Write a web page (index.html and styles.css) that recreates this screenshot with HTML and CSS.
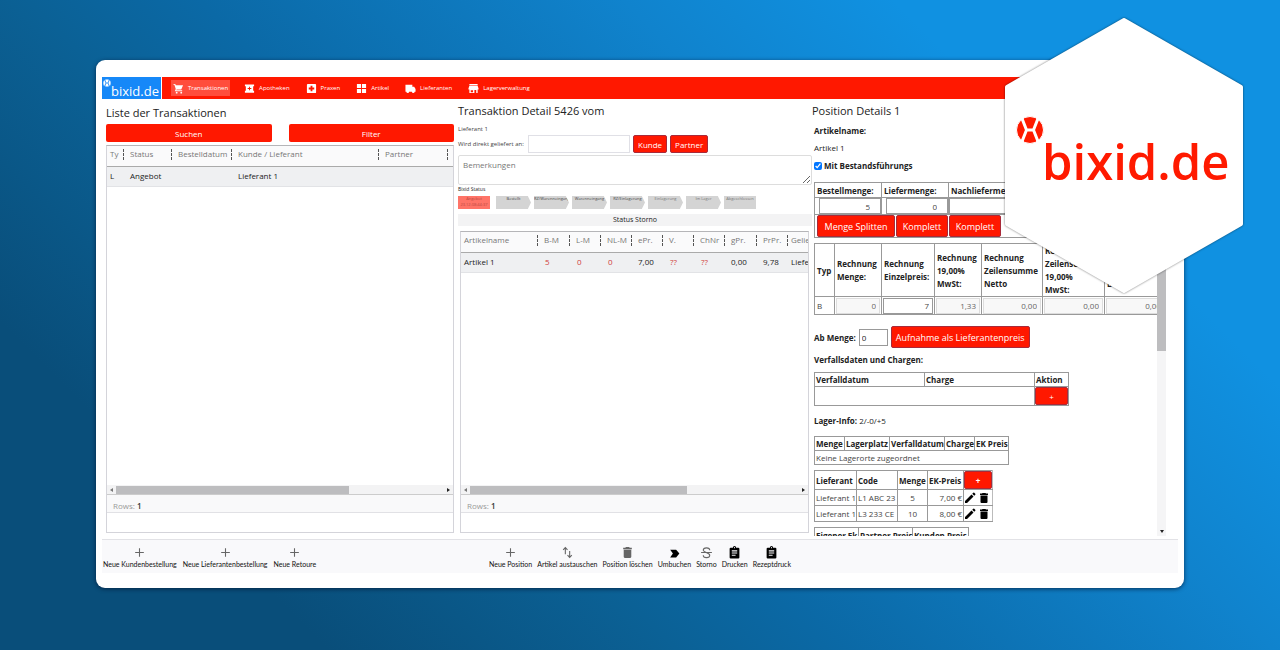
FILE: index.html
```html
<!DOCTYPE html>
<html lang="de">
<head>
<meta charset="utf-8">
<meta name="viewport" content="width=device-width, initial-scale=1">
<title>bixid.de – Transaktionen</title>
<link rel="stylesheet" href="styles.css">
</head>
<body>
<svg class="defs" aria-hidden="true">
  <symbol id="ball" viewBox="-14 -14 28 28"><circle r="13.5" fill="currentColor"/><path class="ball-lines" d="M-9-14-3.500 0-9 14M9-14 3.500 0 9 14M-3 0H3" fill="none" stroke-width="3"/></symbol>
  <symbol id="plus" viewBox="0 0 24 24"><path d="M12 4v16M4 12h16" fill="none" stroke="currentColor" stroke-width="2"/></symbol>
  <symbol id="trash" viewBox="0 0 24 24"><path d="M5 7h14v13a2 2 0 0 1-2 2H7a2 2 0 0 1-2-2zM4 3h4l1-1h6l1 1h4v3H4z"/></symbol>
  <symbol id="pencil" viewBox="0 0 24 24"><path d="M2 18 15 5l4 4L6 22H2zM16.500 3.500l2-2a1.500 1.500 0 0 1 2 0l2 2a1.500 1.500 0 0 1 0 2l-2 2z"/></symbol>
  <symbol id="clip" viewBox="0 0 24 24"><path fill-rule="evenodd" d="M19 3h-4a3 3 0 0 0-6 0H5a2 2 0 0 0-2 2v16a2 2 0 0 0 2 2h14a2 2 0 0 0 2-2V5a2 2 0 0 0-2-2zm-7-1a1 1 0 1 1 0 2 1 1 0 0 1 0-2zM7 8h10v2H7zm0 4h10v2H7zm0 4h7v2H7z"/></symbol>
</svg>

<main class="card">
  <header class="topbar">
    <a class="brand brand-small" href="#"><svg class="brand-ball"><use href="#ball"/></svg><span class="brand-name">bixid.de</span></a>
    <nav class="nav">
      <a class="nav-item active" href="#"><svg viewBox="0 0 24 24"><path d="M1 2h4l1 3h16l-4 9H8l-1 2h13v2H4l2-5L3 4H1z"/><circle cx="8" cy="21" r="2"/><circle cx="18" cy="21" r="2"/></svg>Transaktionen</a>
      <a class="nav-item" href="#"><svg viewBox="0 0 24 24"><path fill-rule="evenodd" d="M2 3h20v4h-2v10h2v4H2v-4h2V7H2zm9 5v3H8v2h3v3h2v-3h3v-2h-3V8z"/></svg>Apotheken</a>
      <a class="nav-item" href="#"><svg viewBox="0 0 24 24"><path fill-rule="evenodd" d="M4 2h16a2 2 0 0 1 2 2v16a2 2 0 0 1-2 2H4a2 2 0 0 1-2-2V4a2 2 0 0 1 2-2zm6 4v4H6v4h4v4h4v-4h4v-4h-4V6z"/></svg>Praxen</a>
      <a class="nav-item" href="#"><svg viewBox="0 0 24 24"><path d="M2 2h9v9H2zM13 2h9v9h-9zM2 13h9v9H2zM13 13h9v9h-9z"/></svg>Artikel</a>
      <a class="nav-item" href="#"><svg viewBox="0 0 24 24"><path d="M1 4h15v4h4l3 5v6h-2a3 3 0 0 1-6 0H9a3 3 0 0 1-6 0H1z"/></svg>Lieferanten</a>
      <a class="nav-item" href="#"><svg viewBox="0 0 24 24"><path fill-rule="evenodd" d="M3 2h18v3H3zM3 6h18l2 6v2h-2v8h-3v-7h-4v7H3v-8H1v-2zm3 10v4h5v-4z"/></svg>Lagerverwaltung</a>
    </nav>
  </header>

  <div class="columns">
    <section class="list-pane">
      <h2>Liste der Transaktionen</h2>
      <div class="pair"><button class="btn">Suchen</button><button class="btn">Filter</button></div>
      <div class="grid">
        <table class="data">
          <colgroup><col class="w18"><col class="w48"><col class="w60"><col class="w147"><col class="w69"><col></colgroup>
          <thead><tr><th>Ty</th><th>Status</th><th>Bestelldatum</th><th>Kunde / Lieferant</th><th>Partner</th><th></th></tr></thead>
          <tbody><tr><td>L</td><td>Angebot</td><td></td><td>Lieferant 1</td><td></td><td></td></tr></tbody>
        </table>
        <div class="hscroll"><i class="arrow left"></i><div class="track"><div class="thumb" style="width:71%"></div></div><i class="arrow right"></i></div>
        <div class="rows">Rows: <b>1</b></div>
      </div>
    </section>

    <section class="detail-pane">
      <h2>Transaktion Detail 5426 vom</h2>
      <p class="small">Lieferant 1</p>
      <div class="deliver"><label class="small" for="ziel">Wird direkt geliefert an:</label><input id="ziel" type="text"><button class="btn edged">Kunde</button><button class="btn edged">Partner</button></div>
      <textarea aria-label="Bemerkungen" placeholder="Bemerkungen"></textarea>
      <p class="tiny">Bixid Status</p>
      <ol class="steps"><li class="now">Angebot<br>23.12.08:44:37</li><li>Bestellt</li><li>RZ/Warenneingang</li><li>Warenneingang</li><li>RZ/Einlagerung</li><li class="dim">Einlagerung</li><li class="dim">Im Lager</li><li class="dim last">Abgeschlossen</li></ol>
      <button class="storno">Status Storno</button>
      <div class="grid inset">
        <table class="data articles">
          <colgroup><col class="w78"><col class="w32"><col class="w31"><col class="w31"><col class="w31"><col class="w31"><col class="w31"><col class="w32"><col class="w31"><col></colgroup>
          <thead><tr><th>Artikelname</th><th>B-M</th><th>L-M</th><th>NL-M</th><th>ePr.</th><th>V.</th><th>ChNr</th><th>gPr.</th><th>PrPr.</th><th>Gelie</th></tr></thead>
          <tbody><tr><td>Artikel 1</td><td class="red">5</td><td class="red">0</td><td class="red">0</td><td>7,00</td><td class="red">??</td><td class="red">??</td><td>0,00</td><td>9,78</td><td>Liefe</td></tr></tbody>
        </table>
        <div class="hscroll"><i class="arrow left"></i><div class="track"><div class="thumb" style="width:66%"></div></div><i class="arrow right"></i></div>
        <div class="rows">Rows: <b>1</b></div>
      </div>
    </section>

    <section class="position-pane">
      <h2>Position Details 1</h2>
      <div class="scroller">
        <div class="position">
          <h3>Artikelname:</h3>
          <p>Artikel 1</p>
          <label class="check"><input type="checkbox" checked>Mit Bestandsführungs</label>

          <table class="lined amounts">
            <thead><tr><th>Bestellmenge:</th><th>Liefermenge:</th><th>Nachliefermenge:</th></tr></thead>
            <tbody>
              <tr><td><input type="text" aria-label="Bestellmenge" value="5"></td><td><input type="text" aria-label="Liefermenge" value="0"></td><td><input type="text" aria-label="Nachliefermenge"></td></tr>
              <tr><td colspan="3"><div class="amount-buttons"><button class="btn edged">Menge Splitten</button><button class="btn edged">Komplett</button><button class="btn edged">Komplett</button></div></td></tr>
            </tbody>
          </table>

          <table class="lined invoice">
            <colgroup><col class="w20"><col class="w47"><col class="w53"><col class="w47"><col class="w61"><col class="w62"><col class="w62"></colgroup>
            <thead><tr><th>Typ</th><th>Rechnung Menge:</th><th>Rechnung Einzelpreis:</th><th>Rechnung 19,00% MwSt:</th><th>Rechnung Zeilensumme Netto</th><th>Rechnung Zeilensumme 19,00%<br>MwSt:</th><th>Rechnung Zeilensumme Brutto</th></tr></thead>
            <tbody><tr><td>B</td><td><input disabled aria-label="Menge" value="0"></td><td><input aria-label="Einzelpreis" value="7"></td><td><input disabled aria-label="MwSt" value="1,33"></td><td><input disabled aria-label="Netto" value="0,00"></td><td><input disabled aria-label="Zeilensumme MwSt" value="0,00"></td><td><input disabled aria-label="Brutto" value="0,00"></td></tr></tbody>
          </table>

          <div class="from"><label for="ab">Ab Menge:</label><input id="ab" type="text" value="0"><button class="btn edged">Aufnahme als Lieferantenpreis</button></div>

          <h3>Verfallsdaten und Chargen:</h3>
          <table class="lined batches">
            <colgroup><col class="w110"><col class="w110"><col class="w34"></colgroup>
            <thead><tr><th>Verfalldatum</th><th>Charge</th><th>Aktion</th></tr></thead>
            <tbody><tr><td colspan="2"></td><td><button class="btn edged add">+</button></td></tr></tbody>
          </table>

          <p class="stock"><b>Lager-Info:</b> 2/-0/+5</p>
          <table class="lined places">
            <colgroup><col class="w30"><col class="w45"><col class="w55"><col class="w30"><col class="w34"></colgroup>
            <thead><tr><th>Menge</th><th>Lagerplatz</th><th>Verfalldatum</th><th>Charge</th><th>EK Preis</th></tr></thead>
            <tbody><tr><td colspan="5">Keine Lagerorte zugeordnet</td></tr></tbody>
          </table>

          <table class="lined suppliers">
            <colgroup><col class="w42"><col class="w41"><col class="w30"><col class="w36"><col class="w29"></colgroup>
            <thead><tr><th>Lieferant</th><th>Code</th><th>Menge</th><th>EK-Preis</th><th><button class="btn edged add">+</button></th></tr></thead>
            <tbody>
              <tr><td>Lieferant 1</td><td>L1 ABC 23</td><td class="mid">5</td><td class="end">7,00 €</td><td><div class="tools"><button aria-label="Bearbeiten"><svg><use href="#pencil"/></svg></button><button aria-label="Löschen"><svg><use href="#trash"/></svg></button></div></td></tr>
              <tr><td>Lieferant 1</td><td>L3 233 CE</td><td class="mid">10</td><td class="end">8,00 €</td><td><div class="tools"><button aria-label="Bearbeiten"><svg><use href="#pencil"/></svg></button><button aria-label="Löschen"><svg><use href="#trash"/></svg></button></div></td></tr>
            </tbody>
          </table>

          <table class="lined prices">
            <colgroup><col class="w44"><col class="w54"><col class="w56"></colgroup>
            <thead><tr><th>Eigener Ek</th><th>Partner Preis</th><th>Kunden Preis</th></tr></thead>
          </table>
        </div>
        <div class="vscroll"><div class="vthumb"></div><i class="arrow down"></i></div>
      </div>
    </section>
  </div>

  <footer class="actions">
    <div class="group">
      <button><svg class="grey"><use href="#plus"/></svg>Neue Kundenbestellung</button>
      <button><svg class="grey"><use href="#plus"/></svg>Neue Lieferantenbestellung</button>
      <button><svg class="grey"><use href="#plus"/></svg>Neue Retoure</button>
    </div>
    <div class="group">
      <button><svg class="grey"><use href="#plus"/></svg>Neue Position</button>
      <button><svg class="grey" viewBox="0 0 24 24"><path d="M8 15V3M4 7l4-4 4 4M16 9v12M12 17l4 4 4-4" fill="none" stroke="currentColor" stroke-width="2"/></svg>Artikel austauschen</button>
      <button><svg class="grey"><use href="#trash"/></svg>Position löschen</button>
      <button><svg viewBox="0 0 24 24"><path d="M4 7h11l6 7-6 7H4l5-7z"/></svg>Umbuchen</button>
      <button><svg class="grey" viewBox="0 0 24 24"><path d="M2 12h20M18 8c0-6-12-6-12 0 0 4 12 4 12 9 0 6-12 6-12 0" fill="none" stroke="currentColor" stroke-width="2"/></svg>Storno</button>
      <button><svg><use href="#clip"/></svg>Drucken</button>
      <button><svg><use href="#clip"/></svg>Rezeptdruck</button>
    </div>
  </footer>
</main>

<aside class="badge">
  <svg class="hexagon" viewBox="0 0 238 276" aria-hidden="true"><path d="M119 2 236 69V206L119 273 2 206V69Z"/></svg>
  <div class="brand brand-large"><svg class="brand-ball"><use href="#ball"/></svg><span class="brand-name">bixid.de</span></div>
</aside>
</body>
</html>
```
FILE: styles.css
```css
* { box-sizing: border-box; }

body {
  position: relative;
  display: flex;
  min-height: 100vh;
  margin: 0;
  padding: 60px 96px 62px;
  background: linear-gradient(45deg, #094e7a 17%, #0b6094 34%, #0b69a6 44%, #1083cd 66%, #1091e1 80%);
  font: 8px/13px "Open Sans", "Noto Sans", sans-serif;
  color: #222;
}

h2, h3, p, ol { margin: 0; padding: 0; }
h2 { font-size: 11px; line-height: 16px; font-weight: 500; }
h3 { font-size: 8px; line-height: 13px; font-weight: 700; }
button, input, textarea { margin: 0; font: inherit; color: inherit; }
button { padding: 0; border: 0; background: none; }
a { color: inherit; text-decoration: none; }
svg { display: block; fill: currentColor; }
.defs { position: absolute; width: 0; height: 0; }

.card {
  display: flex;
  flex: 1;
  flex-direction: column;
  min-width: 0;
  padding: 17px 6px 15px;
  border-radius: 9px;
  background: #fff;
  box-shadow: 0 1px 4px rgba(0, 20, 50, .7);
}

/* Top bar */
.topbar { display: flex; height: 22px; gap: 1px; }
.brand { display: flex; align-items: flex-start; }
.brand-name { font-weight: 500; }
.brand-small { width: 59px; padding: 2px 0 0 1px; background: #1688f8; color: #fff; }
.brand-small .brand-ball { width: 8px; height: 8px; flex: none; stroke: #1688f8; }
.brand-small .brand-name { margin-top: 4px; font-size: 13px; line-height: 16px; }
.nav { display: flex; flex: 1; align-items: center; gap: 12px; padding-left: 9px; background: #ff1800; color: #fff; font-size: 6px; font-weight: 500; }
.nav-item { display: flex; align-items: center; gap: 4px; height: 16px; padding: 0 2px; }
.nav-item svg { width: 11px; height: 11px; }
.nav-item.active { background: #ff4d3c; }

/* Columns */
.columns { display: grid; flex: 1; grid-template-columns: 356fr 354fr 366fr; min-height: 0; }
.columns > section { display: flex; flex-direction: column; min-width: 0; }
.list-pane { padding: 6px 4px 6px; }
.detail-pane { padding: 4px 0 6px; }
.position-pane { padding: 4px 0 3px; }

.btn { border-radius: 2px; background: #ff1800; color: #fff; text-align: center; }
.btn.edged { border: 1px solid #a82a3a; }
.pair { display: grid; grid-template-columns: 1fr 1fr; gap: 17px; margin: 3px 0; }
.pair .btn { height: 18px; }

.grid { display: flex; flex: 1; flex-direction: column; border: 1px solid #d4d4da; border-top-color: #b5b5b8; padding-bottom: 19px; }
.grid.inset { margin: 5px 3px 0 2px; }
.data { width: 100%; table-layout: fixed; border-collapse: collapse; }
.data th, .data td { height: 20px; padding: 0 0 4px 5px; overflow: hidden; white-space: nowrap; text-align: left; font-weight: 400; }
.data th { position: relative; color: #777; background: #fafafb; border-bottom: 1px solid #aaa; }
.data th:not(:last-child)::after { content: ""; position: absolute; top: 3px; right: 1px; height: 11px; border-right: 1px dashed #555; }
.data th:first-child, .data td:first-child { padding-left: 3px; }
.data td { padding-bottom: 2px; background: #eff0f2; border-bottom: 1px solid #e2e3e6; }
.articles .red { padding-left: 6px; color: #d03c3c; }
.articles th:last-child, .articles td:last-child { padding-left: 2px; }
.hscroll { display: flex; align-items: center; height: 10px; margin-top: auto; background: #f3f3f4; border-bottom: 1px solid #ccc; }
.track { flex: 1; }
.thumb { height: 8px; background: #bdbdbf; }
.arrow { width: 9px; text-align: center; }
.arrow::before { content: ""; display: block; width: 0; margin: 0 auto; border: 2px solid transparent; }
.arrow.left::before { border-right: 3px solid #777; border-left: 0; }
.arrow.right::before { border-left: 3px solid #222; border-right: 0; }
.arrow.down::before { border-top: 3px solid #222; border-bottom: 0; }
.rows { height: 18px; padding: 4px 6px 0; background: #f9f9fa; border-bottom: 1px solid #e1e1e5; color: #999; }
.rows b { color: #333; font-weight: 600; }

/* Transaction detail */
.small { font-size: 6px; line-height: 12px; color: #444; }
.detail-pane .small { margin-top: 4px; }
.deliver { display: flex; align-items: center; gap: 3px; }
.deliver .small { width: 67px; margin: 0; white-space: nowrap; }
.deliver input { width: 102px; height: 18px; border: 1px solid #e0e0e6; }
.deliver .btn { height: 18px; padding: 0 4px; }
textarea { display: block; width: 100%; height: 30px; margin-top: 2px; padding: 2px 4px; border: 1px solid #ddd; border-radius: 2px; }
textarea::placeholder { color: #777; }
.tiny { font-size: 5px; line-height: 9px; }
.steps { display: flex; gap: 3px; margin: 2px 0 5px; list-style: none; font-size: 4px; line-height: 6px; }
.steps li { width: 35px; height: 13px; overflow: hidden; background: #d4d4d4; color: #444; text-align: center; white-space: nowrap; clip-path: polygon(0 0, 91% 0, 100% 50%, 91% 100%, 0 100%); }
.steps .now { width: 32px; margin-right: 3px; background: #ff7468; color: #b84840; clip-path: none; }
.steps .dim { color: #777; }
.steps .last { width: 32px; clip-path: none; }
.storno { width: 100%; height: 12px; background: #f3f3f4; line-height: 12px; font-size: 7px; }

/* Position details */
.scroller { display: grid; flex: 1 1 0px; grid-template-columns: minmax(0, 1fr) 9px; grid-template-rows: minmax(0, 1fr); min-height: 0; margin-right: 12px; overflow: hidden; }
.position { padding: 5px 0 0 2px; overflow: hidden; }
.position > p { margin-top: 4px; }
.check { display: flex; align-items: center; gap: 2px; margin: 5px 0 10px; font-weight: 700; }
.check input { width: 8px; height: 8px; }
.vscroll { display: flex; flex-direction: column; justify-content: space-between; background: #f5f5f6; padding-bottom: 3px; }
.vthumb { height: 56%; background: #bdbdbf; }

.lined { border-collapse: collapse; table-layout: fixed; }
.lined th, .lined td { height: 16px; padding: 0 1px; border: 1px solid #999; text-align: left; white-space: nowrap; }
.lined th { font-weight: 700; }
.lined td { color: #444; }
.lined input { display: block; width: 100%; height: 16px; padding: 0 10px; border: 1px solid #999; background: #fff; text-align: right; }
.amounts { width: 274px; }
.amounts th { height: 15px; padding: 0 2px; }
.amounts th:nth-child(-n+2) { width: 67px; }
.amounts td { height: 17px; padding: 0 0 0 4px; }
.amounts td[colspan] { padding: 0 2px; }
.amounts td:nth-child(3) { padding: 0; }
.amount-buttons { display: flex; gap: 1px; font-size: 9px; }
.amount-buttons .btn { width: 52px; height: 22px; }
.amount-buttons .btn:first-child { width: 78px; }
.invoice { width: 352px; margin-top: 5px; }
.invoice th { height: 53px; padding: 0 2px; white-space: normal; }
.invoice td { height: 18px; padding: 0 1px; }
.invoice td:first-child { padding-left: 2px; }
.invoice input { padding: 0 3px; }
.invoice input:disabled { border-color: #ddd; background: #f8f8f8; color: #666; }
.from { display: flex; align-items: center; gap: 3px; margin: 11px 0 5px; font-weight: 700; }
.from input { width: 29px; height: 17px; padding: 0 2px; border: 1px solid #999; font-weight: 400; }
.from .btn { height: 22px; padding: 0 4px; font-size: 9px; font-weight: 400; }
.batches { width: 255px; margin-top: 6px; }
.batches th { height: 14px; }
.batches td { height: 19px; padding: 0; }
.add { display: block; width: 100%; height: 18px; }
.position > .stock { margin: 8px 0 9px; }
.places { width: 194px; }
.places th, .places td { height: 14px; }
.suppliers { width: 178px; margin-top: 5px; }
.suppliers th { height: 19px; }
.suppliers th:last-child, .suppliers td:last-child { padding: 0; border-right-color: #bbb; }
.suppliers .mid { text-align: center; }
.suppliers .end { text-align: right; }
.tools { display: flex; gap: 2px; }
.tools button { color: #000; }
.tools svg { width: 12px; height: 12px; }
.prices { width: 154px; margin-top: 5px; }

/* Bottom actions */
.actions { display: grid; grid-template-columns: 356fr 720fr; height: 34px; border-top: 1px solid #e2e2e6; background: #f9f9fb; }
.group { display: flex; align-items: flex-start; gap: 6px; padding: 6px 0 0 1px; }
.group + .group { gap: 5px; padding-left: 31px; }
.group button { display: flex; flex-direction: column; align-items: center; font: 400 7px/11px Lato, "Open Sans", sans-serif; white-space: nowrap; color: #111; }
.group svg { width: 13px; height: 13px; color: #000; }
.group .grey { color: #666; }

.w18 { width: 18px; } .w20 { width: 20px; } .w29 { width: 29px; } .w30 { width: 30px; }
.w31 { width: 31px; } .w32 { width: 32px; } .w34 { width: 34px; } .w36 { width: 36px; }
.w41 { width: 41px; } .w42 { width: 42px; } .w44 { width: 44px; } .w45 { width: 45px; }
.w47 { width: 47px; } .w48 { width: 48px; } .w53 { width: 53px; } .w54 { width: 54px; }
.w55 { width: 55px; } .w56 { width: 56px; } .w60 { width: 60px; } .w61 { width: 61px; }
.w62 { width: 62px; } .w69 { width: 69px; } .w78 { width: 78px; } .w110 { width: 110px; }
.w147 { width: 147px; }

/* Logo badge lying over the card corner */
.badge { position: absolute; top: 18px; right: 37px; width: 238px; height: 276px; display: flex; flex-direction: column; padding: 98px 0 0 11px; }
.hexagon { position: absolute; inset: 0; width: 100%; height: 100%; fill: #fff; stroke: #fff; stroke-width: 4; stroke-linejoin: round; filter: drop-shadow(0 0 1px rgba(0, 0, 0, .55)); overflow: visible; }
.brand-large { position: relative; color: #ff1a00; }
.brand-large .brand-ball { width: 28px; height: 28px; flex: none; stroke: #fff; }
.brand-large .brand-name { margin: 20px 0 0 -2px; font-size: 49px; line-height: 50px; font-weight: 600; }
```
